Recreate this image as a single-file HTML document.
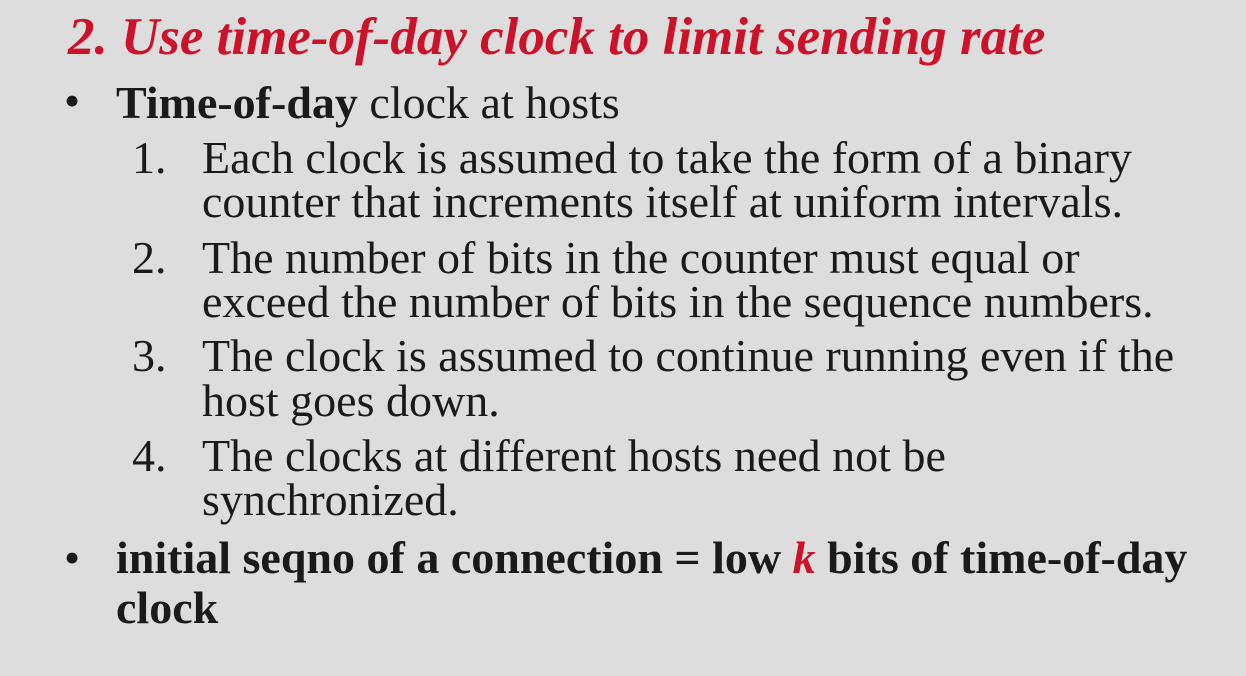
<!DOCTYPE html>
<html><head><style>
html,body{margin:0;padding:0}
body{width:1246px;height:676px;background:#dddddd;font-family:"Liberation Serif",serif;color:#1a1a1a;position:relative;overflow:hidden}
.t{position:absolute;white-space:nowrap}
.title{left:68px;top:7px;font-size:53px;font-weight:bold;font-style:italic;color:#cc1229}
.b{font-size:46px}
.red{color:#cc1229;font-style:italic}
</style></head><body>
<div class="t title">2. Use time-of-day clock to limit sending rate</div>
<div class="t b" style="left:64px;top:74px">•</div>
<div class="t b" style="left:116px;top:76px"><b>Time-of-day</b> clock at hosts</div>

<div class="t b" style="left:132px;top:131px">1.</div>
<div class="t b" style="left:202px;top:131px">Each clock is assumed to take the form of a binary</div>
<div class="t b" style="left:202px;top:175px">counter that increments itself at uniform intervals.</div>

<div class="t b" style="left:132px;top:231px">2.</div>
<div class="t b" style="left:202px;top:231px">The number of bits in the counter must equal or</div>
<div class="t b" style="left:202px;top:275px">exceed the number of bits in the sequence numbers.</div>

<div class="t b" style="left:132px;top:329px">3.</div>
<div class="t b" style="left:202px;top:329px">The clock is assumed to continue running even if the</div>
<div class="t b" style="left:202px;top:374px">host goes down.</div>

<div class="t b" style="left:132px;top:429px">4.</div>
<div class="t b" style="left:202px;top:429px">The clocks at different hosts need not be</div>
<div class="t b" style="left:202px;top:473px">synchronized.</div>

<div class="t b" style="left:64px;top:531px">•</div>
<div class="t b" style="left:116px;top:531px;font-weight:bold">initial seqno of a connection = low <span class="red">k</span> bits of time-of-day</div>
<div class="t b" style="left:116px;top:581px;font-weight:bold">clock</div>
</body></html>
